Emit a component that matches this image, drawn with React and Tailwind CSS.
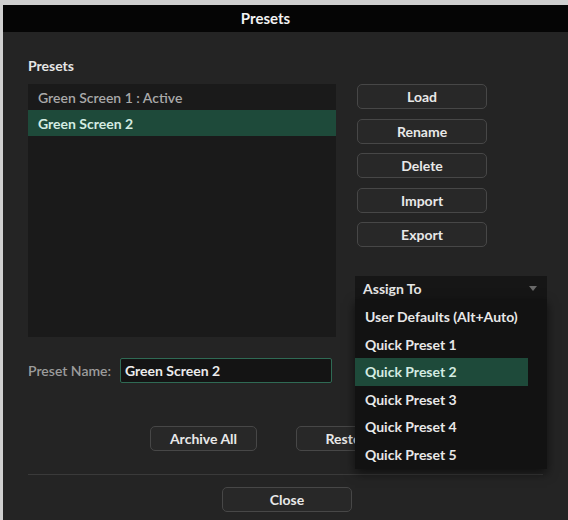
import React from "react";

const presets = [
  { name: "Green Screen 1 : Active", selected: false },
  { name: "Green Screen 2", selected: true },
];

const actions = ["Load", "Rename", "Delete", "Import", "Export"];

const quickTargets = [
  "User Defaults (Alt+Auto)",
  "Quick Preset 1",
  "Quick Preset 2",
  "Quick Preset 3",
  "Quick Preset 4",
  "Quick Preset 5",
];

function DialogButton({ children, className = "" }) {
  return (
    <button
      className={
        "h-[25px] rounded-[5px] border border-[#474747] bg-[#282828] text-[14px] font-bold text-[#e8e8e8] " +
        className
      }
    >
      {children}
    </button>
  );
}

export default function App() {
  return (
    <div
      className="w-[568px] h-[520px] bg-[#cfcfcf] pt-[5px] pl-[3px] overflow-hidden"
      style={{ fontFamily: "Lato, 'Open Sans', 'Noto Sans', sans-serif" }}
    >
      <div className="flex h-full flex-col bg-[#242424]">
        {/* title bar */}
        <div className="flex h-[27px] items-center justify-center bg-[#050505] pr-[40px] text-[15px] font-bold text-[#f2f2f2]">
          Presets
        </div>

        <div className="flex flex-col px-[25px]">
          <div className="mt-[25px] h-[17px] text-[14px] font-bold leading-[17px] text-[#e6e6e6]">
            Presets
          </div>

          <div className="mt-[10px] flex">
            {/* preset list */}
            <div className="h-[253px] w-[308px] shrink-0 bg-[#1a1a1a]">
              {presets.map((p) => (
                <div
                  key={p.name}
                  className={
                    "flex h-[26px] items-center px-[10px] text-[14px] " +
                    (p.selected
                      ? "bg-[#1e4a3a] font-bold text-[#d4ece2]"
                      : "font-semibold text-[#a9a9a9]")
                  }
                >
                  {p.name}
                </div>
              ))}
            </div>

            {/* action column */}
            <div className="relative ml-[21px] flex flex-col">
              <div className="flex flex-col gap-[9.5px]">
                {actions.map((a) => (
                  <DialogButton key={a} className="w-[130px]">
                    {a}
                  </DialogButton>
                ))}
              </div>

              <div className="mt-[29px] -ml-[2px] flex h-[24px] w-[192px] items-center justify-between bg-[#161616] pl-[8px] pr-[10px]">
                <span className="text-[14px] font-bold text-[#e6e6e6]">Assign To</span>
                <svg width="8" height="5" viewBox="0 0 8 5">
                  <path d="M0 0 L8 0 L4 5 Z" fill="#6a6a6a" />
                </svg>
              </div>

              {/* open assign menu */}
              <div className="absolute left-[-2px] top-[215px] z-10 w-[192px] h-[170px] bg-[#121212] pt-[4px] shadow-[0_4px_10px_rgba(0,0,0,0.6)]">
                {quickTargets.map((t) => (
                  <div
                    key={t}
                    className={
                      "flex h-[27.5px] w-[173px] items-center px-[10px] text-[14px] font-bold " +
                      (t === "Quick Preset 2"
                        ? "bg-[#1e4a3a] text-[#d4ece2]"
                        : "text-[#e8e8e8]")
                    }
                  >
                    {t}
                  </div>
                ))}
              </div>
            </div>
          </div>

          {/* preset name */}
          <div className="mt-[21px] flex items-center">
            <span className="w-[92px] text-[14px] font-semibold text-[#9c9c9c]">Preset Name:</span>
            <div className="flex h-[25px] w-[212px] items-center rounded-[2px] border border-[#2f6a54] bg-[#141414] px-[4px] text-[14px] font-bold text-[#ececec]">
              Green Screen 2
            </div>
          </div>

          <div className="mt-[43px] flex pl-[122px]">
            <DialogButton className="w-[107px]">Archive All</DialogButton>
            <DialogButton className="ml-[39px] w-[107px]">Restore</DialogButton>
          </div>

          <div className="mt-[23px] h-[1px] w-[515px] bg-[#3a3a3a]" />

          <div className="mt-[12px] flex pl-[194px]">
            <DialogButton className="w-[130px]">Close</DialogButton>
          </div>
        </div>
      </div>
    </div>
  );
}
